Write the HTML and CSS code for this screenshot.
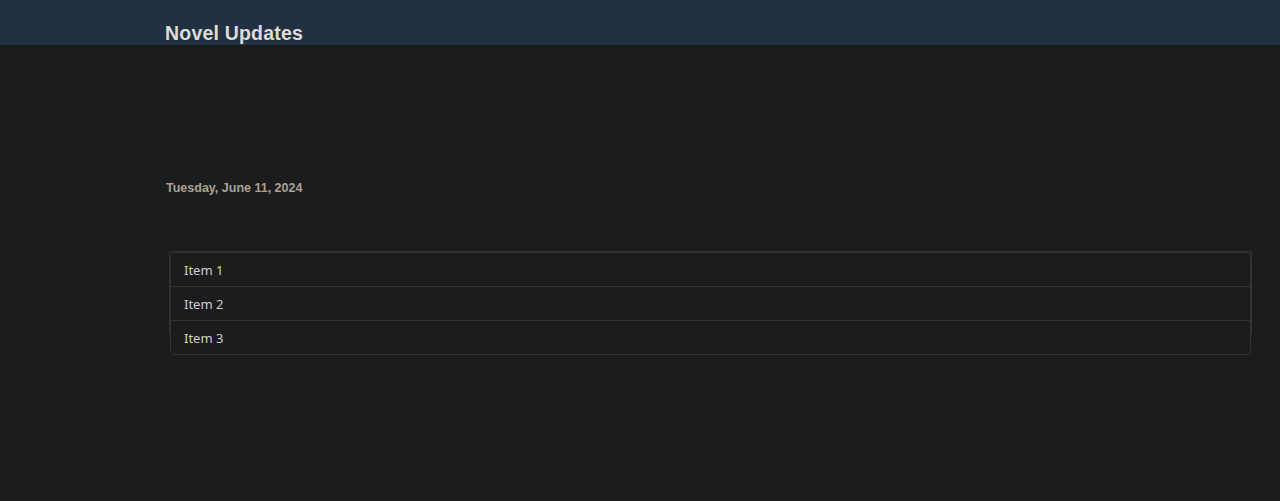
FILE: index.html
```html
<!DOCTYPE html>
<html>
<head>
<meta charset="utf-8">
<link rel="stylesheet" href="styles.css">
</head>
<body>
<header class="topbar">
  <div class="brand">Novel Updates</div>
</header>
<main class="content">
  <div class="date">Tuesday, June 11, 2024</div>
  <div class="list-wrap">
    <ul class="list">
      <li class="item">Item 1</li>
      <li class="item">Item 2</li>
      <li class="item">Item 3</li>
    </ul>
  </div>
</main>
</body>
</html>
```
FILE: styles.css
```css
html, body {
  margin: 0;
  padding: 0;
  background: #1b1c1e;
  height: 100%;
}
.topbar {
  height: 45px;
  background: #223142;
  box-sizing: border-box;
  padding: 22px 0 0 165px;
}
.brand {
  font-family: "Liberation Sans", Arial, sans-serif;
  font-weight: bold;
  font-size: 19.5px;
  letter-spacing: 0.2px;
  line-height: 22px;
  color: #dedcd8;
}
.content {
  padding: 136px 28px 0 165px;
}
.date {
  font-family: "Liberation Sans", Arial, sans-serif;
  font-weight: bold;
  font-size: 12.5px;
  line-height: 14px;
  padding-left: 1px;
  color: #a9a294;
}
.list-wrap {
  margin: 56px 0 0 4px;
  height: 82px;
  border: 1px solid #2e3032;
  border-bottom: none;
}
.list {
  list-style: none;
  margin: 0;
  padding: 0;
  border: 1px solid #313335;
  border-radius: 5px;
  background: #1b1c1e;
}
.item {
  font-family: "Noto Sans", "Open Sans", sans-serif;
  font-size: 13px;
  color: #d3cfc8;
  height: 33px;
  line-height: 35px;
  padding-left: 13px;
  border-top: 1px solid #313335;
}
.item:first-child {
  border-top: none;
}
```
